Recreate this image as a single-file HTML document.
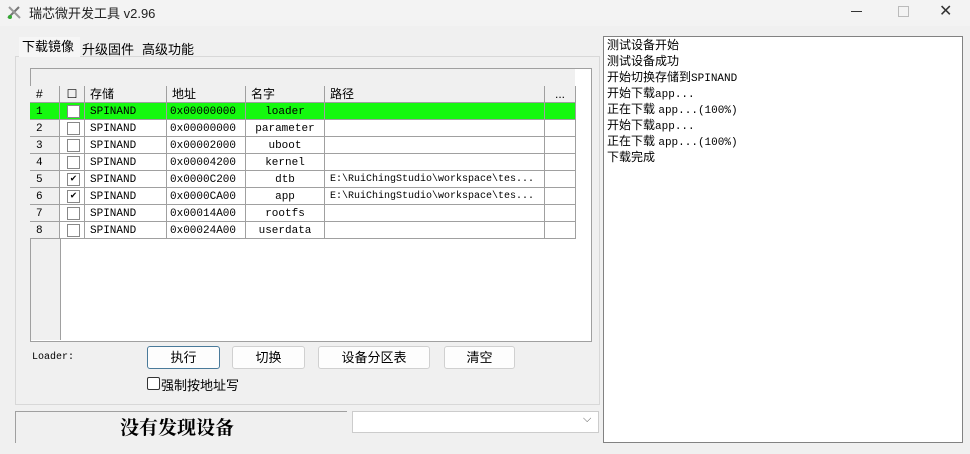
<!DOCTYPE html>
<html><head><meta charset="utf-8"><style>
body{margin:0;width:970px;height:454px;background:#f0f0f0;position:relative;overflow:hidden;font-family:"Liberation Sans","Noto Sans CJK SC",sans-serif;font-size:12px;color:#000}
.a{position:absolute}
.mono{font-family:"Liberation Mono","Noto Sans CJK SC",monospace;font-size:11px}
.row{position:absolute;left:30px;height:17px;width:546px}
.c{position:absolute;top:0;height:16px;border-right:1px solid #a0a0a0;border-bottom:1px solid #a0a0a0;line-height:18px;box-sizing:content-box;overflow:hidden;white-space:nowrap}
.btn{position:absolute;top:346px;height:21px;border:1px solid #d0d0d0;border-radius:3px;background:#fdfdfd;text-align:center;line-height:21px;font-size:13px}
.cb{position:absolute;left:7px;top:2px;width:11px;height:11px;border:1px solid #888;background:#fff;font-size:10px;line-height:11px;text-align:center}
.log div{height:16px;line-height:16px;white-space:nowrap}
</style></head><body>
<div class="a" style="left:0;top:0;width:970px;height:26px;background:#f3f3f3"></div>
<svg class="a" style="left:6px;top:4px" width="16" height="16"><path d="M2 14 L13 3" stroke="#777" stroke-width="2"/><path d="M3 3 L14 14" stroke="#999" stroke-width="2"/><circle cx="4" cy="13" r="2" fill="#3a3"/></svg>
<div class="a" style="left:29px;top:3px;font-size:13px;color:#222">瑞芯微开发工具 v2.96</div>
<div class="a" style="left:851px;top:11px;width:11px;height:1px;background:#333"></div>
<div class="a" style="left:898px;top:6px;width:9px;height:9px;border:1px solid #bbb"></div>
<div class="a" style="left:939px;top:1px;font-size:16px;color:#333">✕</div>

<div class="a" style="left:15px;top:56px;width:583px;height:347px;border:1px solid #d8d8d8;background:#f0f0f0"></div>
<div class="a" style="left:19px;top:37px;width:58px;height:20px;background:#f6f6f6;font-size:13px;line-height:20px;padding-left:3px">下载镜像</div>
<div class="a" style="left:82px;top:39px;font-size:13px">升级固件</div>
<div class="a" style="left:142px;top:39px;font-size:13px">高级功能</div>

<div class="a" style="left:30px;top:68px;width:560px;height:272px;border:1px solid #a0a0a0;background:#fff"></div>
<div class="a" style="left:31px;top:69px;width:544px;height:17px;background:#f0f0f0;border-bottom:1px solid #a0a0a0"></div>
<div class="a" style="left:31px;top:86px;width:29px;height:254px;background:#f0f0f0;border-right:1px solid #a0a0a0"></div>
<div class="row" style="top:86px;background:#f0f0f0;height:16px">
<div class="c" style="left:0;width:29px;line-height:16px"><span style="padding-left:6px">#</span></div>
<div class="c" style="left:30px;width:24px;text-align:center;font-size:12px;line-height:16px">☐</div>
<div class="c" style="left:55px;width:81px;line-height:16px"><span style="padding-left:5px">存储</span></div>
<div class="c" style="left:137px;width:78px;line-height:16px"><span style="padding-left:5px">地址</span></div>
<div class="c" style="left:216px;width:78px;line-height:16px"><span style="padding-left:5px">名字</span></div>
<div class="c" style="left:295px;width:219px;line-height:16px"><span style="padding-left:5px">路径</span></div>
<div class="c" style="left:515px;width:30px;text-align:center;line-height:16px">...</div>
</div>
<div id="rows"></div>
<script>
var d=[["1","","0x00000000","loader",""],["2","","0x00000000","parameter",""],["3","","0x00002000","uboot",""],["4","","0x00004200","kernel",""],["5","✔","0x0000C200","dtb","E:\\RuiChingStudio\\workspace\\tes..."],["6","✔","0x0000CA00","app","E:\\RuiChingStudio\\workspace\\tes..."],["7","","0x00014A00","rootfs",""],["8","","0x00024A00","userdata",""]];
var h="";d.forEach(function(r,i){var g=i==0;var bg=g?"#15f90f":"#fff";
h+='<div class="row mono" style="top:'+(103+i*17)+'px;background:'+bg+'">'+
'<div class="c" style="left:0;width:29px;background:'+(g?bg:'#f0f0f0')+'"><span style="padding-left:6px">'+r[0]+'</span></div>'+
'<div class="c" style="left:30px;width:24px"><div class="cb">'+r[1]+'</div></div>'+
'<div class="c" style="left:55px;width:81px"><span style="padding-left:5px">SPINAND</span></div>'+
'<div class="c" style="left:137px;width:78px"><span style="padding-left:3px">'+r[2]+'</span></div>'+
'<div class="c" style="left:216px;width:78px;text-align:center">'+r[3]+'</div>'+
'<div class="c" style="left:295px;width:219px;font-size:10px"><span style="padding-left:5px">'+r[4]+'</span></div>'+
'<div class="c" style="left:515px;width:30px"></div></div>';});
document.getElementById("rows").innerHTML=h;
</script>

<div class="a mono" style="left:32px;top:352px;font-size:10px">Loader:</div>
<div class="btn" style="left:147px;width:71px;border-color:#4a7a9a">执行</div>
<div class="btn" style="left:232px;width:71px">切换</div>
<div class="btn" style="left:318px;width:110px">设备分区表</div>
<div class="btn" style="left:444px;width:69px">清空</div>
<div class="a" style="left:147px;top:377px;width:11px;height:11px;border:1px solid #333;border-radius:2px;background:#fff"></div>
<div class="a" style="left:161px;top:375px;font-size:13px">强制按地址写</div>

<div class="a" style="left:15px;top:411px;width:331px;height:31px;border-top:1px solid #a0a0a0;border-left:1px solid #a0a0a0;background:#f0f0f0"></div>
<div class="a" style="left:120px;top:413px;font-size:19px;font-weight:bold;font-family:'Liberation Serif','Noto Serif CJK SC',serif">没有发现设备</div>
<div class="a" style="left:352px;top:411px;width:245px;height:20px;border:1px solid #ccc;background:#fff"></div>
<div class="a" style="left:583px;top:413px;font-size:11px;color:#555">⌵</div>

<div class="a" style="left:603px;top:36px;width:358px;height:405px;border:1px solid #828282;background:#fff"></div>
<div class="a log" style="left:607px;top:37px;font-size:12px">
<div>测试设备开始</div><div>测试设备成功</div><div>开始切换存储到<span class="mono">SPINAND</span></div><div>开始下载<span class="mono">app...</span></div><div>正在下载 <span class="mono">app...(100%)</span></div><div>开始下载<span class="mono">app...</span></div><div>正在下载 <span class="mono">app...(100%)</span></div><div>下载完成</div></div>
</body></html>
